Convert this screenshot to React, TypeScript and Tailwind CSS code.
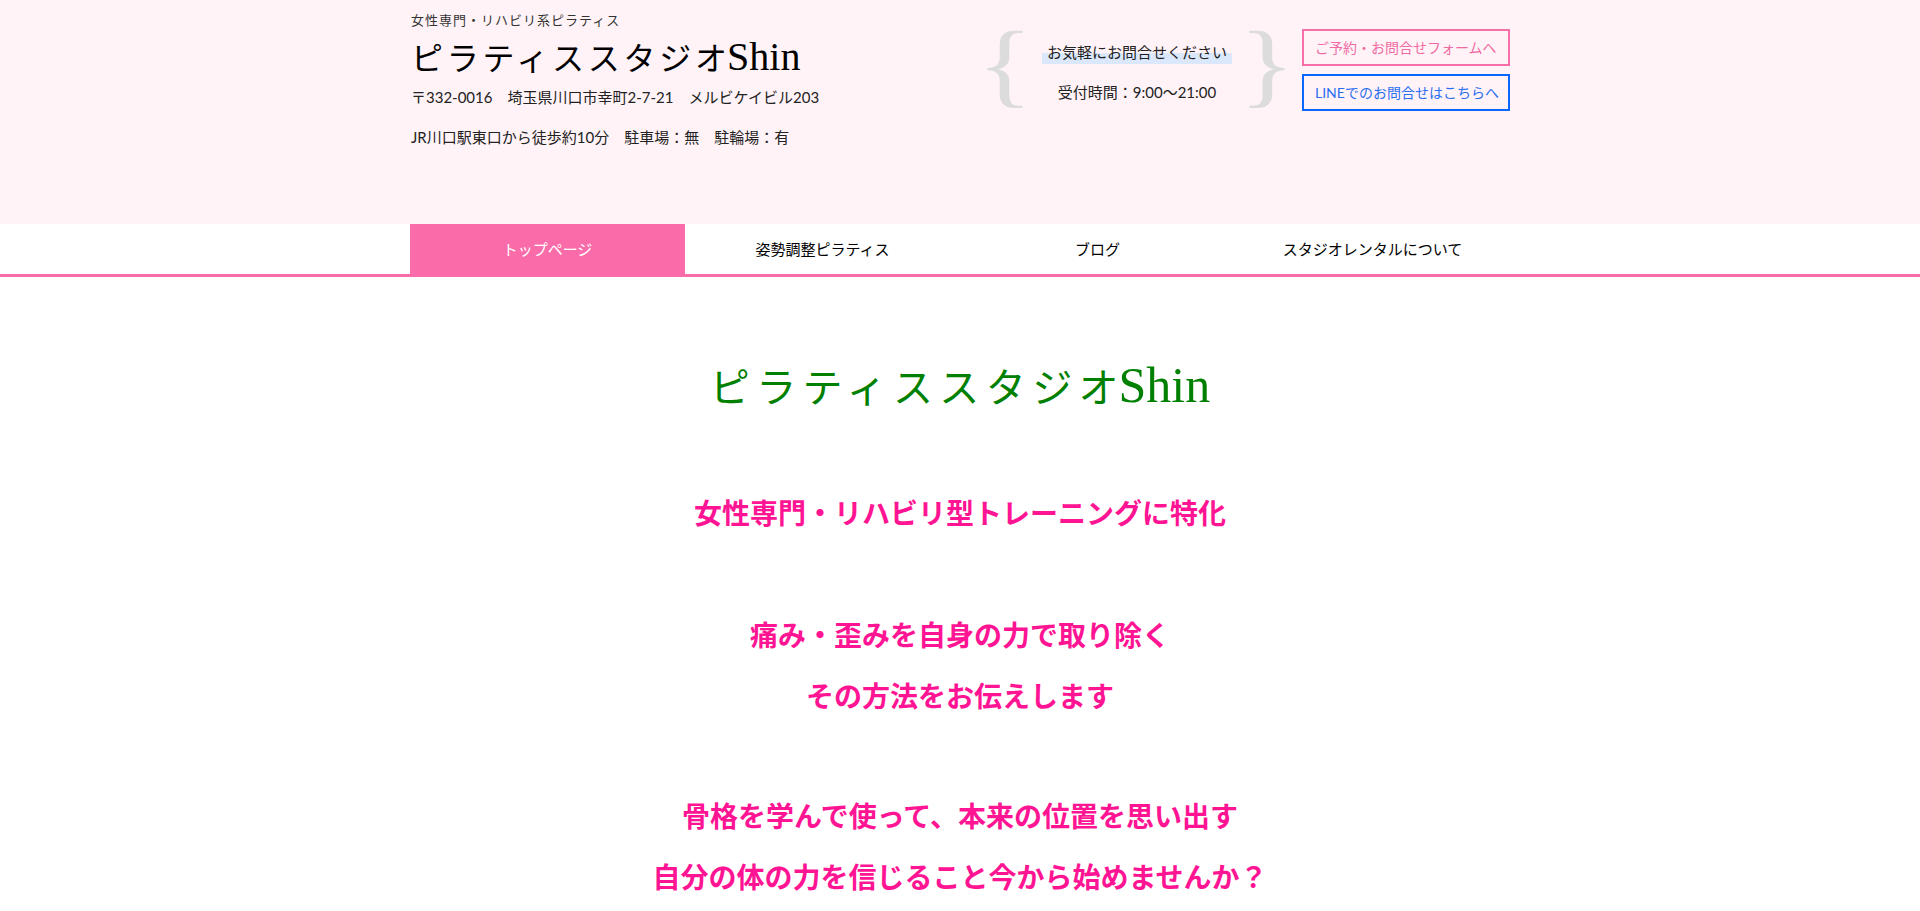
const navItems = ["トップページ", "姿勢調整ピラティス", "ブログ", "スタジオレンタルについて"];

const sans = "font-['Lato','Noto_Sans_CJK_JP',sans-serif]";
const serif = "font-['Liberation_Serif','Noto_Sans_CJK_JP',serif]";

function Brace({ char }: { char: string }) {
  return (
    <span
      className={`${serif} mt-[19px] flex h-[90px] w-[40px] scale-x-125 items-center justify-center text-[94px] leading-none text-[#dcdcdc]`}
    >
      {char}
    </span>
  );
}

function Header() {
  return (
    <header className="h-[224px] bg-[#fff3f7]">
      <div className="mx-auto flex w-[1100px] text-[#222]">
        <div className="w-[575px] pl-[1px]">
          <p className={`${serif} pt-[11px] text-[13px] leading-[20px] tracking-[1px] text-[#333]`}>
            女性専門・リハビリ系ピラティス
          </p>
          <h1 className={`${serif} mt-[6px] h-[40px] text-[32px] leading-[40px] text-black`}>
            <span className="tracking-[3.75px]">ピラティススタジ</span>オ
            <span className="text-[40px] leading-none">Shin</span>
          </h1>
          <p className={`${sans} mt-[8px] text-[15px] leading-[24px]`}>
            〒332-0016　埼玉県川口市幸町2-7-21　メルビケイビル203
          </p>
          <p className={`${sans} mt-[16px] text-[15px] leading-[24px]`}>
            JR川口駅東口から徒歩約10分　駐車場：無　駐輪場：有
          </p>
        </div>
        <div className="flex items-start">
          <Brace char="{" />
          <div className={`${sans} ml-[17px] flex flex-col items-center pt-[40px] text-[15px] text-[#222]`}>
            <p className="bg-[linear-gradient(transparent_55%,#dbe8fb_55%)] px-[5px] leading-[24px]">
              お気軽にお問合せください
            </p>
            <p className="mt-[16px] leading-[24px]">受付時間：9:00〜21:00</p>
          </div>
          <div className="ml-[15px]">
            <Brace char="}" />
          </div>
        </div>
        <div className={`${sans} ml-auto flex w-[208px] flex-col gap-[8px] pt-[29px] text-[14px]`}>
          <a className="flex h-[37px] items-center border-2 border-[#f76fa8] pl-[11px] text-[#f06ba3]">
            ご予約・お問合せフォームへ
          </a>
          <a className="flex h-[37px] items-center border-2 border-[#0a66ff] pl-[11px] text-[#2a6ef0]">
            LINEでのお問合せはこちらへ
          </a>
        </div>
      </div>
    </header>
  );
}

function Nav() {
  return (
    <nav className="border-b-[3px] border-[#fa6ca9] bg-white">
      <ul className={`${sans} mx-auto grid w-[1100px] grid-cols-4 text-[15px]`}>
        {navItems.map((item, i) => (
          <li
            key={item}
            className={
              i === 0
                ? "flex h-[50px] items-center justify-center bg-[#fa6ca9] text-white"
                : "flex h-[50px] items-center justify-center text-black"
            }
          >
            {item}
          </li>
        ))}
      </ul>
    </nav>
  );
}

export default function App() {
  return (
    <div className="min-h-screen bg-white">
      <Header />
      <Nav />
      <main className={`${serif} text-center`}>
        <div className="pt-[82px]">
          <h2 className="h-[60px] text-[40px] leading-[60px] text-[#008000]">
            <span className="tracking-[6.4px]">ピラティススタジ</span>オ
            <span className="text-[50px] leading-none">Shin</span>
          </h2>
        </div>
        <div className="text-[28px] font-semibold leading-[61px] text-[#ff1493]">
          <p className="mt-[65px]">女性専門・リハビリ型トレーニングに特化</p>
          <div className="mt-[61px]">
            <p>痛み・歪みを自身の力で取り除く</p>
            <p>その方法をお伝えします</p>
          </div>
          <div className="mt-[59px]">
            <p>骨格を学んで使って、本来の位置を思い出す</p>
            <p>自分の体の力を信じること今から始めませんか？</p>
          </div>
        </div>
      </main>
    </div>
  );
}
